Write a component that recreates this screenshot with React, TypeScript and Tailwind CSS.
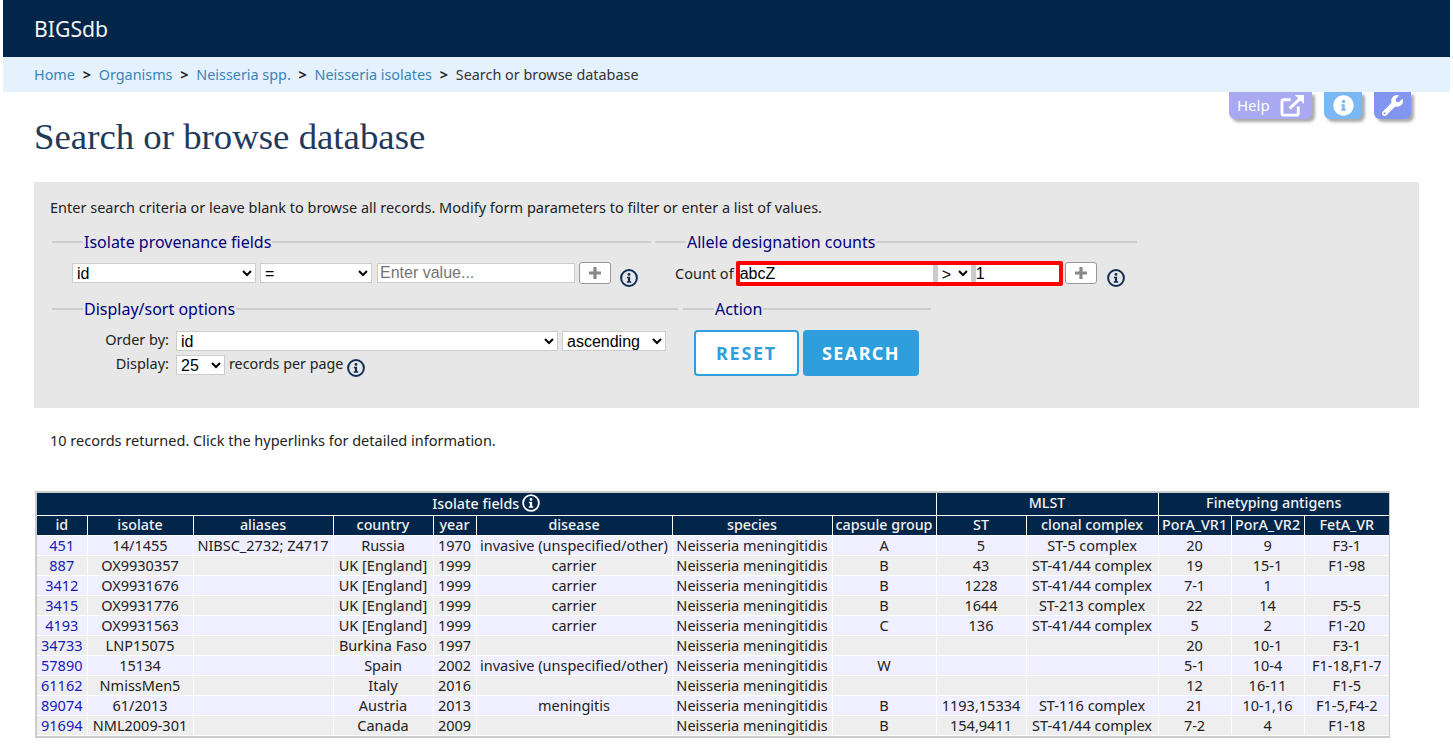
import React from 'react';
import { FaInfoCircle, FaWrench } from 'react-icons/fa';

const InfoIcon = ({ className = '' }: { className?: string }) => (
  <svg viewBox="0 0 18 18" className={`w-[18px] h-[18px] shrink-0 ${className}`}>
    <circle cx="9" cy="9" r="7.9" fill="none" stroke="#0f2d55" strokeWidth="2" />
    <circle cx="9" cy="5.4" r="1.4" fill="#0f2d55" />
    <path d="M6.9 7.8h3.2v4.4h1.1v1.5H6.8v-1.5h1.1V9.3h-1z" fill="#0f2d55" />
  </svg>
);

const PlusButton = () => (
  <button className="w-[32px] h-[22px] mt-px shrink-0 bg-white border border-[#999] rounded-[3px] flex items-center justify-center">
    <svg viewBox="0 0 14 14" className="w-[14px] h-[14px]">
      <path d="M5.4 1h3.2v4.4H13v3.2H8.6V13H5.4V8.6H1V5.4h4.4z" fill="#888" />
    </svg>
  </button>
);

const Field = ({ title, className, children }: { title: string; className: string; children: React.ReactNode }) => (
  <div className={className}>
    <div className="flex items-center h-[20px]">
      <div className="w-[31px] h-[2px] bg-[#ccc]" />
      <div className="text-[#000080] text-[16px] leading-[20px] px-px">{title}</div>
      <div className="flex-1 h-[2px] bg-[#ccc]" />
    </div>
    {children}
  </div>
);

const selectCls = "h-[20px] bg-white border border-[#ccc] text-[16px] leading-[18px] text-black font-['Liberation_Sans',sans-serif]";

const cols = [50, 106, 140, 100, 43, 196, 160, 104, 90, 132, 73, 73, 85];

const rows = [
  ['451', '14/1455', 'NIBSC_2732; Z4717', 'Russia', '1970', 'invasive (unspecified/other)', 'Neisseria meningitidis', 'A', '5', 'ST-5 complex', '20', '9', 'F3-1'],
  ['887', 'OX9930357', '', 'UK [England]', '1999', 'carrier', 'Neisseria meningitidis', 'B', '43', 'ST-41/44 complex', '19', '15-1', 'F1-98'],
  ['3412', 'OX9931676', '', 'UK [England]', '1999', 'carrier', 'Neisseria meningitidis', 'B', '1228', 'ST-41/44 complex', '7-1', '1', ''],
  ['3415', 'OX9931776', '', 'UK [England]', '1999', 'carrier', 'Neisseria meningitidis', 'B', '1644', 'ST-213 complex', '22', '14', 'F5-5'],
  ['4193', 'OX9931563', '', 'UK [England]', '1999', 'carrier', 'Neisseria meningitidis', 'C', '136', 'ST-41/44 complex', '5', '2', 'F1-20'],
  ['34733', 'LNP15075', '', 'Burkina Faso', '1997', '', 'Neisseria meningitidis', '', '', '', '20', '10-1', 'F3-1'],
  ['57890', '15134', '', 'Spain', '2002', 'invasive (unspecified/other)', 'Neisseria meningitidis', 'W', '', '', '5-1', '10-4', 'F1-18,F1-7'],
  ['61162', 'NmissMen5', '', 'Italy', '2016', '', 'Neisseria meningitidis', '', '', '', '12', '16-11', 'F1-5'],
  ['89074', '61/2013', '', 'Austria', '2013', 'meningitis', 'Neisseria meningitidis', 'B', '1193,15334', 'ST-116 complex', '21', '10-1,16', 'F1-5,F4-2'],
  ['91694', 'NML2009-301', '', 'Canada', '2009', '', 'Neisseria meningitidis', 'B', '154,9411', 'ST-41/44 complex', '7-2', '4', 'F1-18'],
];

const heads = ['id', 'isolate', 'aliases', 'country', 'year', 'disease', 'species', 'capsule group', 'ST', 'clonal complex', 'PorA_VR1', 'PorA_VR2', 'FetA_VR'];

export default function App() {
  return (
    <div className="relative px-[3px] h-[755px] overflow-hidden bg-white text-[#222] font-['Noto_Sans',sans-serif] text-[14.5px]">
      {/* Header */}
      <div className="h-[57px] bg-[#02264a] text-[#f2f2f2] text-[21.2px] pl-[31px] flex items-center">BIGSdb</div>
      <div className="h-[35px] bg-[#e5f1fd] pl-[31px] flex items-center gap-[7.75px] text-[14.4px] text-[#333]">
        <a className="text-[#3a84b5]">Home</a>
        <b className="text-[#222]">&gt;</b>
        <a className="text-[#3a84b5]">Organisms</a>
        <b className="text-[#222]">&gt;</b>
        <a className="text-[#3a84b5]">Neisseria spp.</a>
        <b className="text-[#222]">&gt;</b>
        <a className="text-[#3a84b5]">Neisseria isolates</a>
        <b className="text-[#222]">&gt;</b>
        <span>Search or browse database</span>
      </div>

      {/* Floating menu buttons */}
      <div className="absolute top-[92px] left-[1229px] flex gap-[12px] text-white">
        <div className="w-[83px] h-[27px] bg-[#a9a9f2] rounded-b-[6px] shadow-[3px_3px_3px_#aaa] flex items-center pl-[8px] gap-[10px] text-[15px]">
          Help
          <svg viewBox="0 0 26 24" className="w-[25px] h-[23px]" fill="none" stroke="white" strokeWidth="3">
            <path d="M19 13v7a2 2 0 0 1-2 2H4a2 2 0 0 1-2-2V8a2 2 0 0 1 2-2h7" />
            <path d="M10 15 23 3" />
            <path d="M15.5 1h9.5v9.5z" fill="white" stroke="none" />
          </svg>
        </div>
        <div className="w-[38px] h-[27px] bg-[#7ab8f5] rounded-b-[6px] shadow-[3px_3px_3px_#aaa] flex items-center justify-center">
          <FaInfoCircle className="w-[21px] h-[21px]" />
        </div>
        <div className="w-[37px] h-[27px] bg-[#8296f0] rounded-b-[6px] shadow-[3px_3px_3px_#aaa] flex items-center justify-center">
          <FaWrench className="w-[21px] h-[21px]" />
        </div>
      </div>

      <h1 className="pl-[31px] pt-[23px] h-[90px] font-['Liberation_Serif',serif] text-[36.8px] leading-[44px] text-[#1f3a5c]">
        Search or browse database
      </h1>

      {/* Search form */}
      <div className="ml-[31px] w-[1385px] h-[226px] bg-[#e7e7e7] pt-[15px] pl-[16px]">
        <div className="h-[20px] leading-[20px] text-[#222]">
          Enter search criteria or leave blank to browse all records. Modify form parameters to filter or enter a list of values.
        </div>
        <div className="flex mt-[15px] ml-[2px] gap-[4px]">
          <Field title="Isolate provenance fields" className="w-[599px]">
            <div className="flex items-start gap-[4px] mt-[9px] pl-[20px]">
              <select className={`${selectCls} w-[184px] mt-[2px]`}><option>id</option></select>
              <select className={`${selectCls} w-[112px] mt-[2px]`}><option>=</option></select>
              <input readOnly placeholder="Enter value..." className={`${selectCls} w-[198px] mt-[2px] ml-px px-[2px] placeholder:text-[#757575]`} />
              <PlusButton />
              <InfoIcon className="ml-[5px] mt-[8px]" />
            </div>
          </Field>
          <Field title="Allele designation counts" className="w-[482px]">
            <div className="flex items-start mt-[9px] pl-[20px]">
              <span className="mt-[2px] mr-[2px] leading-[20px]">Count of</span>
              <div className="w-[327px] h-[25px] border-[4px] border-[#f00] rounded-[2px] flex bg-[#ccc] shrink-0">
                <input readOnly value="abcZ" className="w-[193px] h-[17px] bg-white text-[16px] text-black font-['Liberation_Sans',sans-serif]" />
                <select className="w-[33px] h-[17px] ml-[5px] bg-white text-[16px] text-black font-['Liberation_Sans',sans-serif]"><option>&gt;</option></select>
                <input readOnly value="1" className="flex-1 min-w-0 ml-[5px] h-[17px] bg-white text-[16px] text-black font-['Liberation_Sans',sans-serif]" />
              </div>
              <div className="ml-[2px]"><PlusButton /></div>
              <InfoIcon className="ml-[10px] mt-[8px]" />
            </div>
          </Field>
        </div>
        <div className="flex mt-[12px] ml-[2px] gap-[5px]">
          <Field title="Display/sort options" className="w-[626px]">
            <div className="grid grid-cols-[117px_auto] gap-x-[7px] gap-y-[4px] mt-[12px] items-start">
              <div className="text-right leading-[16px]">Order by:</div>
              <div className="flex gap-[4px]">
                <select className={`${selectCls} w-[382px]`}><option>id</option></select>
                <select className={`${selectCls} w-[104px]`}><option>ascending</option></select>
              </div>
              <div className="text-right leading-[16px]">Display:</div>
              <div className="flex items-start gap-[4px]">
                <select className={`${selectCls} w-[49px]`}><option>25</option></select>
                <span className="leading-[18px] text-[14.3px]">records per page</span>
                <InfoIcon className="mt-[4px]" />
              </div>
            </div>
          </Field>
          <Field title="Action" className="w-[248px]">
            <div className="flex gap-[4px] mt-[11px] ml-[11px]">
              <button className="w-[105px] h-[46px] bg-white border-2 border-[#2e9fdc] rounded-[4px] text-[#2e9fdc] font-bold text-[18px] tracking-[1.7px]">RESET</button>
              <button className="w-[116px] h-[46px] bg-[#2e9fdc] rounded-[4px] text-white font-bold text-[18px] tracking-[1.4px]">SEARCH</button>
            </div>
          </Field>
        </div>
      </div>

      <div className="ml-[47px] mt-[22px] leading-[20px]">10 records returned. Click the hyperlinks for detailed information.</div>

      {/* Results */}
      <div className="ml-[32px] mt-[41px] w-[1355px] border-[2.5px] border-[#ccc]">
        <table className="table-fixed w-full border-collapse text-[14.5px] text-center leading-[19px]">
          <colgroup>
            {cols.map((w, i) => <col key={i} style={{ width: w }} />)}
          </colgroup>
          <thead className="bg-[#02264a] text-[#f2f2f2] text-[14.3px] leading-[17px]">
            <tr className="h-[22px]">
              <th colSpan={8} className="font-medium border border-white border-t-0 border-l-0 p-0 pb-[2px]">
                <span className="inline-flex items-center gap-[3px] align-middle">
                  Isolate fields
                  <svg viewBox="0 0 18 18" className="w-[18px] h-[18px]">
                    <circle cx="9" cy="9" r="7.9" fill="none" stroke="white" strokeWidth="1.8" />
                    <circle cx="9" cy="5.4" r="1.4" fill="white" />
                    <path d="M6.9 7.8h3.2v4.4h1.1v1.5H6.8v-1.5h1.1V9.3h-1z" fill="white" />
                  </svg>
                </span>
              </th>
              <th colSpan={2} className="font-medium border border-white border-t-0 p-0 pb-[2px]">MLST</th>
              <th colSpan={3} className="font-medium border border-white border-t-0 border-r-0 p-0 pb-[2px]">Finetyping antigens</th>
            </tr>
            <tr className="h-[20px]">
              {heads.map((h) => (
                <th key={h} className="font-medium border border-white first:border-l-0 last:border-r-0 p-0 pb-[2px] whitespace-nowrap overflow-hidden">{h}</th>
              ))}
            </tr>
          </thead>
          <tbody>
            {rows.map((r, i) => (
              <tr key={r[0]} className={i % 2 === 0 ? 'h-[20px] bg-[#efefff]' : 'h-[20px] bg-[#eee]'}>
                {r.map((c, j) => (
                  <td key={j} className={j === 0 ? 'border border-white border-l-0 p-0 text-[#1a1ab8]' : 'border border-white last:border-r-0 p-0 whitespace-nowrap'}>{c}</td>
                ))}
              </tr>
            ))}
          </tbody>
        </table>
      </div>
    </div>
  );
}
